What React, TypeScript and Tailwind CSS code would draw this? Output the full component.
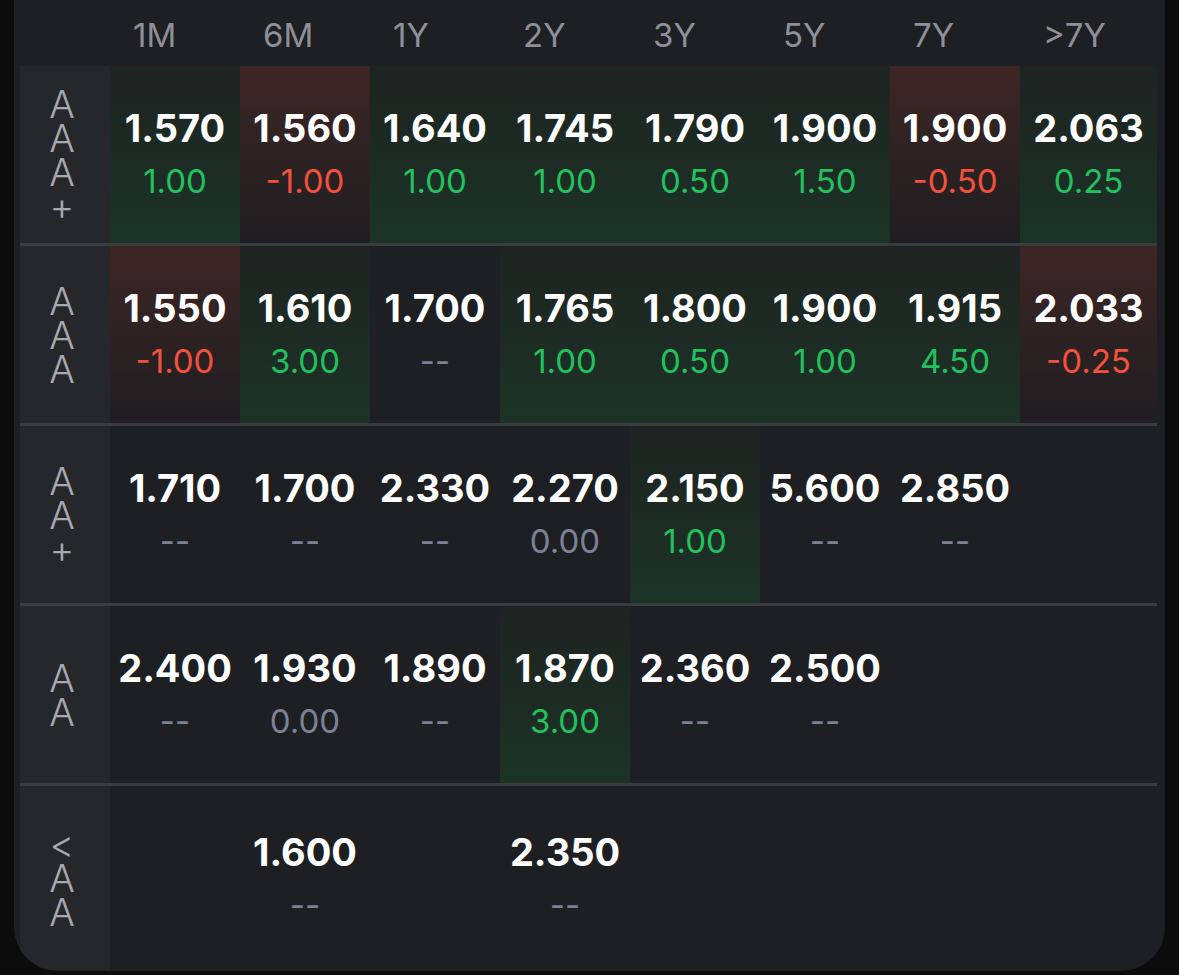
import React from "react";

type Tone = "up" | "down" | "flat";

interface Quote {
  value: string;
  change: string;
  tone?: Tone;
}

type Row = {
  label: string;
  cells: (Quote | null)[];
  height: string;
};

const TENORS = ["1M", "6M", "1Y", "2Y", "3Y", "5Y", "7Y", ">7Y"];

const ROWS: Row[] = [
  {
    label: "AAA+",
    height: "h-[177px]",
    cells: [
      { value: "1.570", change: "1.00", tone: "up" },
      { value: "1.560", change: "-1.00", tone: "down" },
      { value: "1.640", change: "1.00", tone: "up" },
      { value: "1.745", change: "1.00", tone: "up" },
      { value: "1.790", change: "0.50", tone: "up" },
      { value: "1.900", change: "1.50", tone: "up" },
      { value: "1.900", change: "-0.50", tone: "down" },
      { value: "2.063", change: "0.25", tone: "up" },
    ],
  },
  {
    label: "AAA",
    height: "h-[177px]",
    cells: [
      { value: "1.550", change: "-1.00", tone: "down" },
      { value: "1.610", change: "3.00", tone: "up" },
      { value: "1.700", change: "--" },
      { value: "1.765", change: "1.00", tone: "up" },
      { value: "1.800", change: "0.50", tone: "up" },
      { value: "1.900", change: "1.00", tone: "up" },
      { value: "1.915", change: "4.50", tone: "up" },
      { value: "2.033", change: "-0.25", tone: "down" },
    ],
  },
  {
    label: "AA+",
    height: "h-[177px]",
    cells: [
      { value: "1.710", change: "--" },
      { value: "1.700", change: "--" },
      { value: "2.330", change: "--" },
      { value: "2.270", change: "0.00" },
      { value: "2.150", change: "1.00", tone: "up" },
      { value: "5.600", change: "--" },
      { value: "2.850", change: "--" },
      null,
    ],
  },
  {
    label: "AA",
    height: "h-[177px]",
    cells: [
      { value: "2.400", change: "--" },
      { value: "1.930", change: "0.00" },
      { value: "1.890", change: "--" },
      { value: "1.870", change: "3.00", tone: "up" },
      { value: "2.360", change: "--" },
      { value: "2.500", change: "--" },
      null,
      null,
    ],
  },
  {
    label: "<AA",
    height: "h-[184px]",
    cells: [
      null,
      { value: "1.600", change: "--" },
      null,
      { value: "2.350", change: "--" },
      null,
      null,
      null,
      null,
    ],
  },
];

const gridCols = "grid grid-cols-[90px_130px_130px_130px_130px_130px_130px_130px_1fr]";

function changeColor(change: string) {
  if (change.startsWith("-") && change !== "--") return "text-[#f2513b]";
  if (change === "--" || change === "0.00") return "text-[#7c8295]";
  return "text-[#22c15e]";
}

function cellBg(tone?: Tone) {
  if (tone === "up") return "bg-linear-to-b from-[#1e2321] to-[#1b3327]";
  if (tone === "down") return "bg-linear-to-b from-[#3d2524] to-[#1f1e21]";
  return "";
}

function QuoteCell({ quote }: { quote: Quote | null }) {
  if (!quote) return <div />;
  return (
    <div className={`flex flex-col items-center justify-center gap-[9px] ${cellBg(quote.tone)}`}>
      <span className="text-[38px] leading-[44px] font-bold text-white">
        {quote.value}
      </span>
      <span className={`text-[33px] leading-[44px] ${changeColor(quote.change)}`}>
        {quote.change}
      </span>
    </div>
  );
}

export default function App() {
  return (
    <div
      className="h-[975px] bg-[#0c0c0c] px-[14px] overflow-hidden"
      style={{ fontFamily: "Inter, 'Noto Sans', sans-serif" }}
    >
      <div className="bg-[#1e1f22] rounded-b-[44px] pl-[6px] pr-[8px] pb-[1px] overflow-hidden">
        {/* tenor header */}
        <div className={`${gridCols} h-[66px]`}>
          <div />
          {TENORS.map((t) => (
            <div key={t} className="flex items-center pl-[23px] pt-[6px] text-[33px] text-[#8d9099]">
              {t}
            </div>
          ))}
        </div>

        {ROWS.map((row, i) => (
          <div key={row.label}>
            <div className={`${gridCols} ${row.height}`}>
              {/* rating label, wrapped one character per line */}
              <div className="bg-[#26272b] flex items-center justify-center pr-[6px]">
                <p className="w-[30px] break-all text-center text-[38px] leading-[34px] font-light text-[#a6a9b0]">
                  {row.label}
                </p>
              </div>
              {row.cells.map((q, j) => (
                <QuoteCell key={j} quote={q} />
              ))}
            </div>
            {i < ROWS.length - 1 && <div className="h-[3px] bg-[#3b3c40]" />}
          </div>
        ))}
      </div>
    </div>
  );
}
